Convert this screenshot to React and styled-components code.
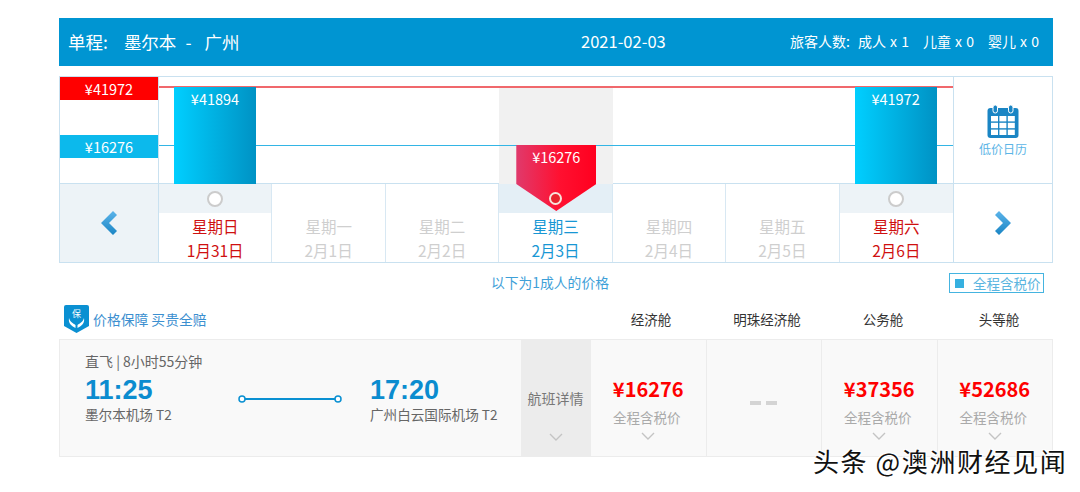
import React from "react";
import styled, { createGlobalStyle } from "styled-components";

const Global = createGlobalStyle`
  html, body { margin: 0; padding: 0; background: #fff; }
  body { font-family: "Noto Sans CJK SC", "Liberation Sans", sans-serif; }
  * { box-sizing: border-box; }
`;

const Page = styled.div`
  position: relative;
  width: 1080px;
  height: 492px;
  overflow: hidden;
  padding: 18px 27px 0 59px;
`;

const TopBar = styled.div`
  height: 48px;
  background: #0095d2;
  color: #fff;
  display: flex;
  align-items: center;
  padding: 0 14px 2px 9px;
`;
const Route = styled.div`
  width: 513px;
  display: flex;
  align-items: center;
  font-size: 17.5px;
  white-space: nowrap;
`;
const RoutePart = styled.span`
  margin-right: ${(p) => p.$gap}px;
`;
const TripDate = styled.div`
  font-size: 16.5px;
`;
const Pax = styled.div`
  margin-left: auto;
  display: flex;
  gap: 14px;
  font-size: 14px;
  word-spacing: 1px;
  white-space: nowrap;
  span:first-child { margin-right: -6px; }
`;

const Chart = styled.div`
  margin-top: 10px;
  height: 187px;
  border: 1px solid #c9e1f0;
  display: grid;
  grid-template-columns: 99px 1fr 99px;
  grid-template-rows: 106px 79px;
`;
const Axis = styled.div`
  border-right: 1px solid #c9e1f0;
  display: flex;
  flex-direction: column;
  gap: 35px;
`;
const AxisTag = styled.div`
  height: 23px;
  background: ${(p) => (p.$red ? "#ff0000" : "#0cb9ec")};
  color: #fff;
  font-size: 14.5px;
  line-height: 23px;
  text-align: center;
`;
const Plot = styled.div`
  position: relative;
  display: grid;
  grid-template-columns: repeat(7, 1fr);
  padding-top: 10px;
`;
const Line = styled.div`
  position: absolute;
  z-index: 1;
  left: 0;
  right: 0;
  top: ${(p) => p.$top}px;
  height: ${(p) => (p.$red ? 2 : 1)}px;
  background: ${(p) => (p.$red ? "#f0686c" : "#33b5e5")};
`;
const PlotCol = styled.div`
  position: relative;
  display: flex;
  align-items: flex-end;
  padding-left: 15px;
  background: ${(p) => (p.$active ? "#f1f1f1" : "transparent")};
`;
const Bar = styled.div`
  position: relative;
  z-index: 2;
  width: 82px;
  height: 97px;
  background: linear-gradient(90deg, #00cfff 0%, #0092c4 100%);
  color: #fff;
  font-size: 14.5px;
  text-align: center;
  padding-top: 3px;
  line-height: 18px;
`;
const Tag = styled.div`
  position: absolute;
  z-index: 2;
  top: 58px;
  left: 17px;
  width: 80px;
  height: 66px;
  background: linear-gradient(90deg, #e03a6c 0%, #ff1030 55%, #ff001f 100%);
  clip-path: polygon(0 0, 100% 0, 100% 59%, 50% 100%, 0 59%);
  color: #fff;
  font-size: 14.5px;
  line-height: 18px;
  padding-top: 3px;
  text-align: center;
`;
const CalendarCell = styled.div`
  border-left: 1px solid #c9e1f0;
  display: flex;
  flex-direction: column;
  align-items: center;
  padding-top: 27px;
  gap: 3px;
  color: #5cb5e6;
  font-size: 12px;
  line-height: 16px;
`;
const NavCell = styled.div`
  border-top: 1px solid #c9e1f0;
  border-left: ${(p) => (p.$right ? "1px solid #c9e1f0" : "0")};
  border-right: ${(p) => (p.$right ? "0" : "1px solid #c9e1f0")};
  background: ${(p) => (p.$right ? "#fff" : "#edf3f7")};
  display: flex;
  align-items: center;
  justify-content: center;
`;
const Days = styled.div`
  display: grid;
  grid-template-columns: repeat(7, 1fr);
  border-top: 1px solid #c9e1f0;
  height: 79px;
`;
const Day = styled.div`
  height: 78px;
  border-right: 1px solid #d8e8f3;
  text-align: center;
  font-size: 15.5px;
  color: ${(p) => (p.$tone === "red" ? "#cf1010" : p.$tone === "blue" ? "#1897d4" : "#cfcfcf")};
  &:last-child { border-right: 0; }
`;
const DayDot = styled.div`
  height: 29px;
  display: flex;
  align-items: center;
  justify-content: center;
  background: ${(p) => (p.$show ? (p.$active ? "#e4eff6" : "#edf3f7") : "transparent")};
  margin-bottom: 1px;
`;
const Dot = styled.span`
  position: relative;
  z-index: 3;
  width: ${(p) => (p.$active ? 13 : 16)}px;
  height: ${(p) => (p.$active ? 13 : 16)}px;
  border-radius: 50%;
  border: 2px solid ${(p) => (p.$active ? "#f7e3da" : "#cccccc")};
  background: ${(p) => (p.$active ? "#e8222c" : "#fff")};
`;
const DayText = styled.div`
  line-height: 24px;
  white-space: nowrap;
`;

const Notice = styled.div`
  margin-top: 9px;
  height: 20px;
  position: relative;
  text-align: center;
  font-size: 13.8px;
  line-height: 20px;
  color: #3ea0d8;
  padding-right: 12px;
`;
const TaxBox = styled.div`
  position: absolute;
  right: 9px;
  top: 1px;
  width: 95px;
  height: 20px;
  border: 1px solid #45b4e0;
  display: flex;
  align-items: center;
  padding-left: 5px;
  gap: 9px;
  color: #5cb5e0;
  font-size: 13.5px;
  white-space: nowrap;
`;
const Square = styled.span`
  width: 9px;
  height: 9px;
  background: #36b0e0;
  flex: none;
`;

const ClassRow = styled.div`
  margin-top: 9px;
  height: 38px;
  padding-bottom: 2px;
  width: 998px;
  display: flex;
  align-items: center;
`;
const Guarantee = styled.div`
  flex: 1;
  display: flex;
  align-items: center;
  gap: 1px;
  padding-left: 5px;
  font-size: 13.8px;
  color: #3b8fd0;
  white-space: pre;
`;
const ClassName = styled.div`
  width: 116px;
  text-align: center;
  font-size: 13.5px;
  color: #333;
`;

const FlightRow = styled.div`
  height: 118px;
  background: #f9f9f9;
  border: 1px solid #ececec;
  display: grid;
  grid-template-columns: 461px 69px repeat(4, 1fr);
`;
const Info = styled.div`
  display: grid;
  grid-template-columns: 153px 132px 1fr;
  padding: 13px 0 0 25px;
  align-content: start;
  color: #666;
`;
const Summary = styled.div`
  grid-column: 1 / -1;
  font-size: 14px;
  line-height: 17px;
`;
const Stop = styled.div`
  font-size: 13.6px;
  line-height: 18px;
  white-space: nowrap;
`;
const Clock = styled.div`
  font-family: "Liberation Sans", sans-serif;
  font-size: 27px;
  font-weight: 700;
  line-height: 30px;
  padding-top: 5px;
  height: 35px;
  color: #0b8ccf;
`;
const RouteWrap = styled.div`
  display: flex;
  align-items: flex-start;
  padding-top: 25px;
`;
const Details = styled.div`
  background: #ececec;
  font-size: 14px;
  color: #777;
  text-align: center;
  padding-top: 48px;
  display: flex;
  flex-direction: column;
  align-items: center;
  gap: 25px;
`;
const Fare = styled.div`
  border-left: 1px solid #ececec;
  text-align: center;
  padding-top: 35px;
  display: flex;
  flex-direction: column;
  align-items: center;
  &:first-of-type { border-left: 0; }
`;
const Price = styled.div`
  font-size: 20px;
  font-weight: 700;
  line-height: 28px;
  color: #ff0000;
`;
const FareNote = styled.div`
  font-size: 13.5px;
  line-height: 24px;
  margin: 2px 3px 3px 0;
  color: #aaa;
`;
const Dash = styled.div`
  margin-top: 26px;
  display: flex;
  gap: 5px;
`;
const DashBit = styled.span`
  width: 11px;
  height: 4px;
  background: #d4d4d4;
`;

const Watermark = styled.div`
  position: absolute;
  left: 813px;
  top: 445px;
  font-size: 26px;
  letter-spacing: 1.6px;
  line-height: 32px;
  color: #111;
  white-space: pre;
  text-shadow: 1px 1px 0 #fff, -1px -1px 0 #fff, 1px -1px 0 #fff, -1px 1px 0 #fff;
`;

const days = [
  ["星期日", "1月31日", "red", true],
  ["星期一", "2月1日"],
  ["星期二", "2月2日"],
  ["星期三", "2月3日", "blue", true, true],
  ["星期四", "2月4日"],
  ["星期五", "2月5日"],
  ["星期六", "2月6日", "red", true],
];

const fares = ["¥16276", null, "¥37356", "¥52686"];

function Chevron({ right, id }) {
  return (
    <svg width="16" height="24" viewBox="0 0 16 24">
      <defs>
        <linearGradient id={id} x1="0" y1="0" x2="0" y2="1">
          <stop offset="0" stopColor="#5cb4ea" />
          <stop offset="1" stopColor="#1a85c4" />
        </linearGradient>
      </defs>
      <path
        d={right ? "M4 0 L16 12 L4 24 L0 20 L8 12 L0 4 Z" : "M12 0 L16 4 L8 12 L16 20 L12 24 L0 12 Z"}
        fill={`url(#${id})`}
      />
    </svg>
  );
}

function CalendarIcon() {
  return (
    <svg width="32" height="34" viewBox="0 0 32 34">
      <rect x="0.5" y="4" width="31" height="30" rx="3" fill="#1a85c4" />
      <rect x="6" y="1" width="4.5" height="8" rx="2.2" fill="#1a85c4" stroke="#fff" strokeWidth="1" />
      <rect x="21.5" y="1" width="4.5" height="8" rx="2.2" fill="#1a85c4" stroke="#fff" strokeWidth="1" />
      {[0, 1, 2].map((c) =>
        [0, 1, 2].map((r) => (
          <rect key={`${c}-${r}`} x={4 + c * 8.4} y={12 + r * 6.8} width="7" height="5.4" fill="#fff" />
        ))
      )}
    </svg>
  );
}

function ShieldIcon() {
  return (
    <svg width="25" height="28" viewBox="0 0 25 28">
      <path d="M2 0 H23 A2 2 0 0 1 25 2 V21 L12.5 28 L0 21 V2 A2 2 0 0 1 2 0 Z" fill="#0a90d2" />
      <text x="12.5" y="12" fontSize="9" fill="#fff" textAnchor="middle" fontFamily="Noto Sans CJK SC">保</text>
      <path d="M5 13 C6 17 9 18 11.5 20 V23 C8 21 4 19 5 13 Z M20 13 C19 17 16 18 13.5 20 V23 C17 21 21 19 20 13 Z" fill="#fff" />
    </svg>
  );
}

function DownCaret() {
  return (
    <svg width="14" height="9" viewBox="0 0 14 9">
      <path d="M1 1 L7 7 L13 1" fill="none" stroke="#c4c4c4" strokeWidth="1.4" />
    </svg>
  );
}

function RouteLine() {
  return (
    <svg width="104" height="8" viewBox="0 0 104 8">
      <line x1="6" y1="4" x2="98" y2="4" stroke="#0a90d2" strokeWidth="2" />
      <circle cx="4" cy="4" r="3" fill="#fff" stroke="#0a90d2" strokeWidth="1.5" />
      <circle cx="100" cy="4" r="3" fill="#fff" stroke="#0a90d2" strokeWidth="1.5" />
    </svg>
  );
}

export default function App() {
  return (
    <Page>
      <Global />
      <TopBar>
        <Route>
          <RoutePart $gap={16}>单程:</RoutePart>
          <RoutePart $gap={9}>墨尔本</RoutePart>
          <RoutePart $gap={13}>-</RoutePart>
          <RoutePart $gap={0}>广州</RoutePart>
        </Route>
        <TripDate>2021-02-03</TripDate>
        <Pax>
          <span>旅客人数:</span>
          <span>成人 x 1</span>
          <span>儿童 x 0</span>
          <span>婴儿 x 0</span>
        </Pax>
      </TopBar>

      <Chart>
        <Axis>
          <AxisTag $red>¥41972</AxisTag>
          <AxisTag>¥16276</AxisTag>
        </Axis>
        <Plot>
          <Line $top={9} $red />
          <Line $top={68} />
          <PlotCol><Bar>¥41894</Bar></PlotCol>
          <PlotCol />
          <PlotCol />
          <PlotCol $active><Tag>¥16276</Tag></PlotCol>
          <PlotCol />
          <PlotCol />
          <PlotCol><Bar>¥41972</Bar></PlotCol>
        </Plot>
        <CalendarCell>
          <CalendarIcon />
          低价日历
        </CalendarCell>
        <NavCell><Chevron id="chev-l" /></NavCell>
        <Days>
          {days.map(([week, date, tone, show, active]) => (
            <Day key={date} $tone={tone}>
              <DayDot $show={show} $active={active}>
                {show && <Dot $active={active} />}
              </DayDot>
              <DayText>{week}</DayText>
              <DayText>{date}</DayText>
            </Day>
          ))}
        </Days>
        <NavCell $right><Chevron right id="chev-r" /></NavCell>
      </Chart>

      <Notice>
        以下为1成人的价格
        <TaxBox><Square />全程含税价</TaxBox>
      </Notice>

      <ClassRow>
        <Guarantee><ShieldIcon />{" 价格保障 买贵全赔"}</Guarantee>
        <ClassName>经济舱</ClassName>
        <ClassName>明珠经济舱</ClassName>
        <ClassName>公务舱</ClassName>
        <ClassName>头等舱</ClassName>
      </ClassRow>

      <FlightRow>
        <Info>
          <Summary>直飞 | 8小时55分钟</Summary>
          <div>
            <Clock>11:25</Clock>
            <Stop>墨尔本机场 T2</Stop>
          </div>
          <RouteWrap><RouteLine /></RouteWrap>
          <div>
            <Clock>17:20</Clock>
            <Stop>广州白云国际机场 T2</Stop>
          </div>
        </Info>
        <Details>
          航班详情
          <DownCaret />
        </Details>
        {fares.map((f, i) =>
          f ? (
            <Fare key={f}>
              <Price>{f}</Price>
              <FareNote>全程含税价</FareNote>
              <DownCaret />
            </Fare>
          ) : (
            <Fare key={i}>
              <Dash><DashBit /><DashBit /></Dash>
            </Fare>
          )
        )}
      </FlightRow>

      <Watermark>{"头条 @澳洲财经见闻"}</Watermark>
    </Page>
  );
}
